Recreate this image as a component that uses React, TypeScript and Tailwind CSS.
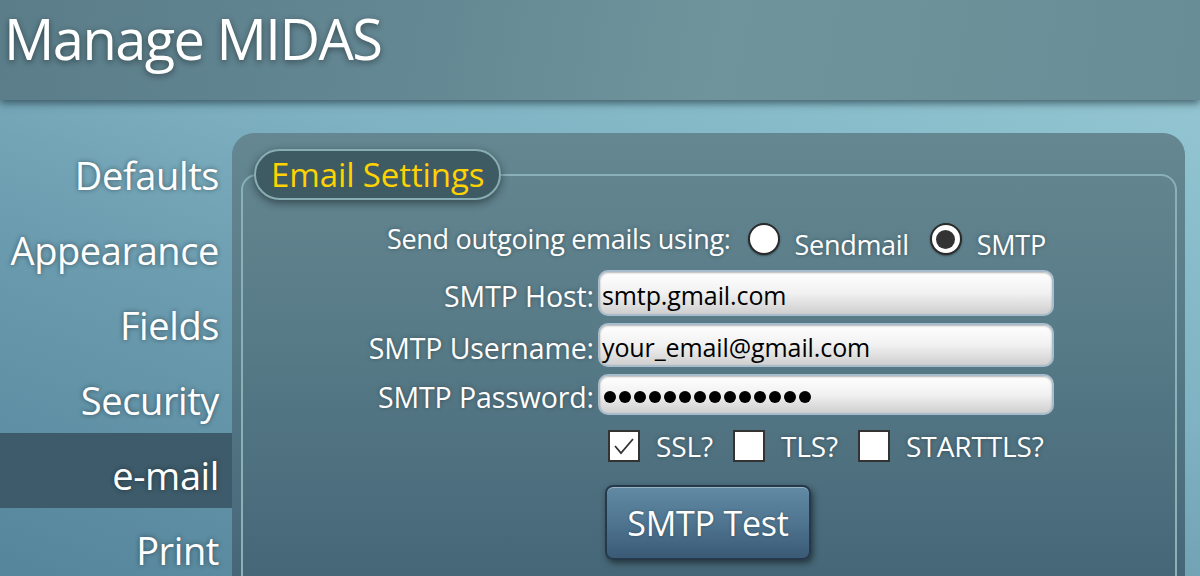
import React from "react";

const font = { fontFamily: '"Open Sans", "Noto Sans", sans-serif' };

function Radio({ checked }: { checked?: boolean }) {
  return (
    <span className="flex h-[32px] w-[32px] shrink-0 items-center justify-center rounded-full border-[2px] border-[#2a2a2a] bg-white shadow-[0_1px_2px_rgba(0,0,0,0.4)]">
      {checked && <span className="h-[19px] w-[19px] rounded-full bg-[#333333]" />}
    </span>
  );
}

function Check({ checked }: { checked?: boolean }) {
  return (
    <span className="flex h-[32px] w-[32px] shrink-0 items-center justify-center border-[2px] border-[#333333] bg-white">
      {checked && (
        <svg width="24" height="24" viewBox="0 0 24 24">
          <path d="M3 12 L9 19 L21 5" fill="none" stroke="#333" strokeWidth="1.8" />
        </svg>
      )}
    </span>
  );
}

function Field({ value, pw }: { value: string; pw?: boolean }) {
  return (
    <div className="flex w-[456px] items-center rounded-[10px] border-[2px] border-[#a9bccb] bg-gradient-to-b from-white via-[#f1f1f1] to-[#cfcfcf] pl-[2px] text-black shadow-[inset_0_1px_2px_rgba(0,0,0,0.3)] [text-shadow:none]">
      {pw ? (
        <span className="ml-[2px] mt-[4px] flex gap-[3px]">
          {Array.from({ length: 14 }).map((_, i) => (
            <span key={i} className="h-[12px] w-[12px] rounded-full bg-black" />
          ))}
        </span>
      ) : (
        <span className="pt-[5px] text-[25px] leading-none tracking-[-0.1px]">{value}</span>
      )}
    </div>
  );
}

export default function App() {
  const nav = ["Defaults", "Appearance", "Fields", "Security", "e-mail", "Print"];
  return (
    <div style={font} className="relative flex h-[576px] w-[1200px] flex-col overflow-hidden text-white">
      <header className="z-10 flex h-[100px] shrink-0 items-start bg-[linear-gradient(100deg,#5a7d89_0%,#628692_30%,#6f949b_60%,#698d96_100%)] pl-[4px] shadow-[0_3px_8px_rgba(30,50,60,0.7)]">
        <h1 className="text-[56px] leading-[76px] tracking-[-1.55px] [text-shadow:0_2px_6px_rgba(0,0,0,0.45)]">
          Manage MIDAS
        </h1>
      </header>
      <div className="flex flex-1 bg-[linear-gradient(200deg,#93c6d2_0%,#7fb2c2_30%,#6c9db0_50%,#4a7a91_100%)] pt-[33px]">
        <nav className="flex w-[232px] shrink-0 flex-col">
          {nav.map((n) => (
            <div
              key={n}
              className={`flex h-[75px] items-center justify-end pr-[13px] pt-[10px] text-[38px] tracking-[-0.4px] [text-shadow:0_0_5px_rgba(0,0,0,0.45)] ${
                n === "e-mail" ? "bg-[#3d5b6a]" : ""
              }`}
            >
              {n}
            </div>
          ))}
        </nav>
        <main className="mr-[15px] flex-1 rounded-t-[22px] bg-[linear-gradient(180deg,#648791_0%,#577a87_35%,#446576_75%,#3c5a6a_100%)] pl-[9px] pr-[8px] pt-[16px]">
          <fieldset className="h-[600px] rounded-[16px] border-[2px] border-[#8ab1b8] px-[11px]">
            <legend className="rounded-full border-[2px] border-[#88aeb3] bg-[#3e5a63] px-[15px] text-[33px] leading-[47px] tracking-[-0.1px] text-[#ffd200] shadow-[0_3px_8px_rgba(0,0,0,0.45)]">
              Email Settings
            </legend>
            <div className="flex flex-col text-[27px] leading-[32px] [text-shadow:0_0_4px_rgba(0,0,0,0.35)]">
              <div className="mt-[23px] flex h-[32px] items-center pl-[133px] tracking-[-0.3px]">
                <span className="mr-[17px] whitespace-nowrap">Send outgoing emails using:</span>
                <Radio />
                <span className="ml-[15px] mr-[21px] mt-[12px]">Sendmail</span>
                <Radio checked />
                <span className="ml-[15px] mt-[12px]">SMTP</span>
              </div>
              <div className="mt-[15px] flex flex-col gap-[7px]">
                {[
                  ["SMTP Host:", "smtp.gmail.com", 46],
                  ["SMTP Username:", "your_email@gmail.com", 44],
                  ["SMTP Password:", "", 41],
                ].map(([l, v, h], i) => (
                  <div key={l as string} className="flex items-stretch" style={{ height: h as number }}>
                    <span className="flex w-[344px] items-center justify-end whitespace-nowrap pr-[4px] pt-[5px] text-[28.5px] tracking-[-0.1px]">
                      {l}
                    </span>
                    <Field value={v as string} pw={i === 2} />
                  </div>
                ))}
              </div>
              <div className="mt-[15px] flex h-[32px] items-center">
                <div className="ml-[354px] flex items-center text-[28px] tracking-[-0.1px]">
                  <Check checked />
                  <span className="ml-[16px] mr-[20px]">SSL?</span>
                  <Check />
                  <span className="ml-[16px] mr-[20px]">TLS?</span>
                  <Check />
                  <span className="ml-[16px]">STARTTLS?</span>
                </div>
              </div>
              <div className="ml-[351px] mt-[23px]">
                <button className="h-[75px] w-[206px] rounded-[8px] border-[2px] border-[#26394a] bg-[linear-gradient(180deg,#628aa4_0%,#4f7590_50%,#3a5a76_100%)] text-[34px] tracking-[-0.2px] text-white shadow-[2px_3px_6px_rgba(0,0,0,0.5),inset_0_1px_0_rgba(255,255,255,0.35)] [text-shadow:0_0_3px_rgba(0,0,0,0.3)]">
                  SMTP Test
                </button>
              </div>
            </div>
          </fieldset>
        </main>
      </div>
    </div>
  );
}
